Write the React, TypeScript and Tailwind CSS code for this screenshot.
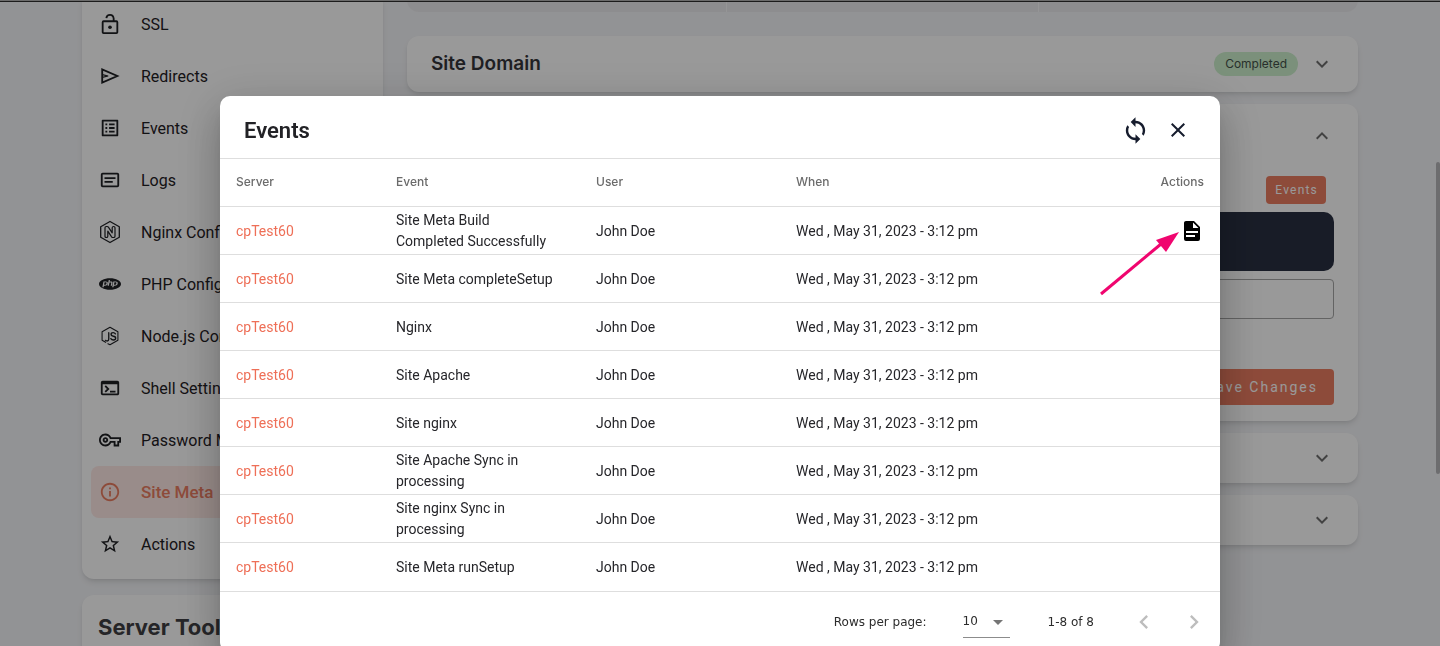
import React from 'react';
import {
  MdArrowDropDown,
  MdChevronLeft,
  MdChevronRight,
  MdClose,
  MdExpandLess,
  MdExpandMore,
  MdOutlineInfo,
  MdOutlineListAlt,
  MdOutlineTerminal,
  MdOutlineVpnKey,
  MdStarBorder,
  MdSync,
} from 'react-icons/md';
import { SiPhp } from 'react-icons/si';

const LockIcon = () => (
  <svg viewBox="0 0 24 24" className="size-[22px]" fill="none" stroke="currentColor" strokeWidth="2">
    <rect x="4" y="9" width="16" height="13" rx="1" />
    <path d="M8 5.500Q8.500 2 12 2t4 4v3" />
    <circle cx="12" cy="15.500" r="2" fill="currentColor" stroke="none" />
  </svg>
);

const SendIcon = () => (
  <svg viewBox="0 0 24 24" className="size-[22px]" fill="none" stroke="currentColor" strokeWidth="2">
    <path d="M3.500 4.800v14.400L20 12z" />
    <path d="M3.500 10.500 10 12l-6.500 1.500" strokeWidth="1.300" />
  </svg>
);

const LogsIcon = () => (
  <svg viewBox="0 0 24 24" className="size-[22px]" fill="none" stroke="currentColor" strokeWidth="2">
    <rect x="3" y="5" width="18" height="14" rx="1" />
    <path d="M6 10h12M6 14h9" />
  </svg>
);

const NginxIcon = () => (
  <svg viewBox="0 0 24 24" className="size-6" fill="none" stroke="currentColor" strokeLinejoin="round">
    <path d="M12 1.500 21.300 6.700v10.600L12 22.500 2.700 17.300V6.700z" strokeWidth="1.300" />
    <path d="M7 16.500V7.800q0-1.300 1.300-1.300h.8q.8 0 1.300.7l3.800 5.600V7.800q0-1.300 1.400-1.300T17 7.800v8.400q0 1.300-1.300 1.300h-.8q-.8 0-1.300-.7l-3.800-5.600v5q0 1.300-1.400 1.300T7 16.500z" strokeWidth="1.200" />
  </svg>
);

const NodeIcon = () => (
  <svg viewBox="0 0 24 24" className="size-5" fill="none" stroke="currentColor" strokeLinejoin="round" strokeLinecap="round">
    <path d="M9.500 21.300 12 22.500l9.500-5.300V6.800L12 1.500 2.500 6.800v10.400l4.300 2.400" strokeWidth="1.300" />
    <path d="M10.500 8v8q0 2-2 2-1 0-2-.8M18.500 9.500Q17.500 8 15.800 8q-2.500 0-2.500 2t2.700 2.300q2.800.3 2.800 2.300T16 16.800q-2 0-3-1.600" strokeWidth="1.600" />
  </svg>
);

const FileIcon = () => (
  <svg viewBox="0 0 24 24" className="size-6" fill="currentColor">
    <path d="M13 9h5.500L13 3.500V9M6 2h8l6 6v12a2 2 0 0 1-2 2H6a2 2 0 0 1-2-2V4c0-1.110.890-2 2-2m9 16v-2H6v2h9m3-4v-2H6v2h12z" />
  </svg>
);

const menu = [
  { label: 'SSL', icon: <LockIcon /> },
  { label: 'Redirects', icon: <SendIcon /> },
  { label: 'Events', icon: <MdOutlineListAlt size={22} /> },
  { label: 'Logs', icon: <LogsIcon /> },
  { label: 'Nginx Config', icon: <NginxIcon /> },
  { label: 'PHP Config', icon: <SiPhp size={22} /> },
  { label: 'Node.js Config', icon: <NodeIcon /> },
  { label: 'Shell Settings', icon: <MdOutlineTerminal size={22} /> },
  { label: 'Password Manager', icon: <MdOutlineVpnKey size={22} /> },
  { label: 'Site Meta', icon: <MdOutlineInfo size={22} />, active: true },
  { label: 'Actions', icon: <MdStarBorder size={22} /> },
];

const events = [
  'Site Meta Build Completed Successfully',
  'Site Meta completeSetup',
  'Nginx',
  'Site Apache',
  'Site nginx',
  'Site Apache Sync in processing',
  'Site nginx Sync in processing',
  'Site Meta runSetup',
];

const Sidebar = () => (
  <aside className="w-[301px] shrink-0">
    <nav className="rounded-b-xl bg-white px-[9px] pb-[9px] shadow-md">
      {menu.map((item) => (
        <a
          key={item.label}
          href="#"
          className={
            item.active
              ? 'flex h-[52px] items-center rounded-lg bg-[#ffeae6] text-[17px] font-medium text-[#ec7d62]'
              : 'flex h-[52px] items-center text-base text-[#1f2024]'
          }
        >
          <span className="flex w-[38px] shrink-0 justify-center">{item.icon}</span>
          <span className="ml-3 pt-0.5">{item.label}</span>
        </a>
      ))}
    </nav>
    <div className="mt-4 h-40 rounded-xl bg-white px-4 pt-4 shadow-md">
      <h2 className="font-['Inter'] text-[22px] leading-8 font-bold text-[#3f3f44]">Server Tools</h2>
    </div>
  </aside>
);

const ClosedPanel = () => (
  <section className="mt-3 flex h-[50px] items-center justify-end rounded-xl bg-white px-6 shadow-md">
    <button aria-label="Expand section" className="text-[#6f6f6f]">
      <MdExpandMore size={24} />
    </button>
  </section>
);

const Main = () => (
  <main className="min-w-0 flex-1">
    <div className="grid h-[14px] grid-cols-[1fr_312px_1fr] divide-x divide-[#f8f8fa] rounded-b-xl bg-[#ececef]">
      <div />
      <div />
      <div />
    </div>
    <section className="mt-6 flex h-14 items-center rounded-xl bg-white px-6 shadow-md">
      <h2 className="font-['Inter'] text-[19px] font-semibold text-[#35353a]">Site Domain</h2>
      <span className="ml-auto rounded-full bg-[#cdf1cd] px-[11px] font-['Inter'] text-xs leading-6 text-[#44504a]">Completed</span>
      <button aria-label="Expand Site Domain" className="ml-3 text-[#6f6f6f]">
        <MdExpandMore size={24} />
      </button>
    </section>
    <section className="mt-3 flex flex-col rounded-xl bg-white px-6 pb-4 shadow-md">
      <div className="flex h-16 items-center justify-end">
        <button aria-label="Collapse section" className="text-[#6f6f6f]">
          <MdExpandLess size={24} />
        </button>
      </div>
      <button className="mt-2 mr-2 h-7 self-end rounded bg-[#ec7d62] pr-2 pl-[9px] text-xs tracking-[1px] text-white">
        <span className="tracking-widest">Events</span>
      </button>
      <div className="mt-2 h-[59px] rounded-[10px] bg-[#293042]" />
      <input aria-label="Site meta" className="mt-2 h-10 rounded border border-[#a5a5a5]" />
      <button className="mt-[50px] h-9 self-end rounded bg-[#ec7d62] px-4 text-sm tracking-[2px] text-white">Save Changes</button>
    </section>
    <ClosedPanel />
    <ClosedPanel />
  </main>
);

const EventsTable = () => (
  <table className="w-full table-fixed text-left">
    <thead>
      <tr className="h-[47px] border-b border-[#dedede] font-['Inter'] text-xs text-[#6b6b6b]">
        <th className="w-44 pl-4 font-medium">Server</th>
        <th className="w-[200px] font-medium">Event</th>
        <th className="w-[200px] font-medium">User</th>
        <th className="font-medium">When</th>
        <th className="w-[100px] pr-4 text-right font-medium">Actions</th>
      </tr>
    </thead>
    <tbody>
      {events.map((event, i) => (
        <tr
          key={event}
          className="h-12 border-b border-[#dedede] text-sm leading-[21px] text-[#26262a] *:pt-0.5 last:h-[49px]"
        >
          <td className="pl-4">
            <a href="#" className="text-[#ee6f57]">cpTest60</a>
          </td>
          <td className="pr-10">{event}</td>
          <td>John Doe</td>
          <td>Wed , May 31, 2023 - 3:12 pm</td>
          <td className="relative pr-4">
            {i === 0 && (
              <>
                <button aria-label="View log" className="ml-auto block text-black">
                  <FileIcon />
                </button>
                <svg className="absolute top-5 right-10 h-[70px] w-20" viewBox="0 0 80 70" aria-hidden="true">
                  <path d="M1 67 61 17" stroke="#f0056f" strokeWidth="3" />
                  <path d="M79 5 56 13 66 25z" fill="#f0056f" />
                </svg>
              </>
            )}
          </td>
        </tr>
      ))}
    </tbody>
  </table>
);

const Pagination = () => (
  <div className="flex h-[60px] items-center justify-end pr-3 font-['DejaVu_Sans'] text-xs text-[#2c2c2c]">
    <label htmlFor="rows">Rows per page:</label>
    <div className="relative ml-9">
      <select id="rows" className="h-8 w-[47px] appearance-none border-b border-[#8c8c8c] bg-transparent">
        <option>10</option>
      </select>
      <MdArrowDropDown size={24} className="pointer-events-none absolute top-1 right-0 text-[#757575]" />
    </div>
    <span className="ml-[38px]">1-8 of 8</span>
    <button aria-label="Previous page" className="ml-9 text-[#bdbdbd]">
      <MdChevronLeft size={28} />
    </button>
    <button aria-label="Next page" className="ml-[22px] text-[#bdbdbd]">
      <MdChevronRight size={28} />
    </button>
  </div>
);

const EventsModal = () => (
  <div className="fixed inset-0 overflow-hidden bg-black/40">
    <div
      role="dialog"
      aria-label="Events"
      className="mx-auto mt-24 w-full max-w-[1000px] rounded-[10px] bg-white shadow-[0_11px_15px_-7px_rgba(0,0,0,0.2),0_24px_38px_3px_rgba(0,0,0,0.14),0_9px_46px_8px_rgba(0,0,0,0.12)]"
    >
      <header className="flex h-[63px] items-center border-b border-[#dedede] px-6 pt-1.5">
        <h1 className="text-[22px] font-semibold text-[#222226]">Events</h1>
        <button aria-label="Refresh" className="ml-auto text-[#161c2d]">
          <MdSync size={29} />
        </button>
        <button aria-label="Close" className="mr-1.5 ml-4 text-[#161c2d]">
          <MdClose size={24} />
        </button>
      </header>
      <EventsTable />
      <Pagination />
    </div>
  </div>
);

const App = () => {
  return (
    <div className="h-screen overflow-hidden bg-[#f4f5f8] font-['Roboto',sans-serif]">
      <div className="mx-auto -mt-0.5 flex w-full max-w-[1276px] gap-6">
        <Sidebar />
        <Main />
      </div>
      <EventsModal />
      <div className="fixed inset-x-0 top-0 h-0.5 border-b border-[#1c1c1c] bg-[#6b6b6b]" />
      <div className="fixed top-1/4 right-0 h-[312px] w-1 rounded-full bg-[#6d6d6f]" />
    </div>
  );
};

export default App;
